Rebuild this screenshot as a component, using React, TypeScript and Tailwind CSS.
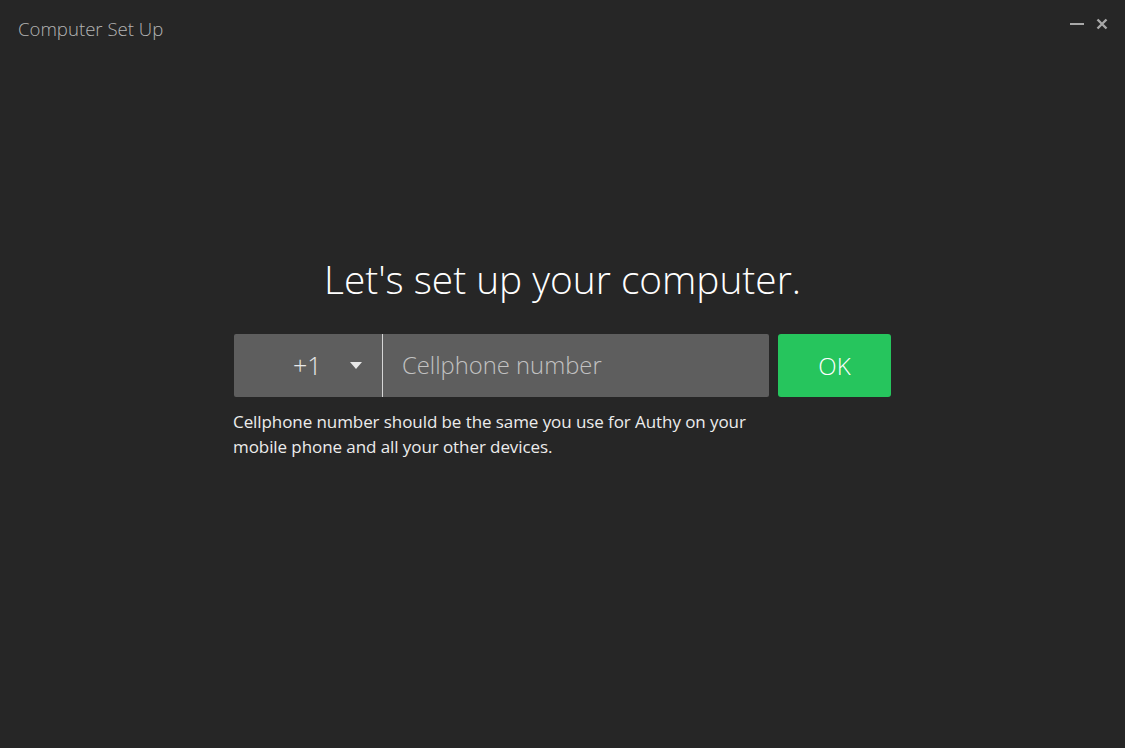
import { useState } from 'react';

export default function App() {
    const [phone, setPhone] = useState('');

    return (
        <div className="relative flex flex-col w-full h-[748px] bg-[#262626] overflow-hidden" style={{ fontFamily: '"Open Sans", sans-serif' }}>
            {/* title bar */}
            <div className="flex items-center justify-between h-[58px] pl-[18px] pr-[17px]">
                <span className="text-[18.6px] font-light text-[#b4b4b4]">Computer Set Up</span>
                <div className="flex items-center gap-[12px] text-[#a8a8a8] -mt-[10px]">
                    <div className="w-[14px] h-[2px] bg-[#a8a8a8]"></div>
                    <svg width="12" height="12" viewBox="0 0 12 12">
                        <path d="M1.5 1.5 L10.5 10.5 M10.5 1.5 L1.5 10.5" stroke="#a8a8a8" strokeWidth="2.4" />
                    </svg>
                </div>
            </div>

            <main className="flex flex-col items-center pt-[193px]">
                <h1 className="text-[38.8px] font-light text-white leading-[56px]">Let's set up your computer.</h1>

                <div className="flex flex-col mt-[27px]">
                    <div className="flex gap-[9px]">
                        <div className="flex w-[535px] h-[63px] bg-[#5e5e5e] rounded-[2px]">
                            <div className="flex items-center w-[149px] border-r border-[#d6d6d6]">
                                <span className="ml-[59px] text-[25px] font-light text-[#e8e8e8]">+1</span>
                                <svg className="ml-[28px]" width="12" height="7" viewBox="0 0 12 7">
                                    <path d="M0 0 H12 L6 7 Z" fill="#e8e8e8" />
                                </svg>
                            </div>
                            <input
                                value={phone}
                                onChange={(e) => setPhone(e.target.value)}
                                placeholder="Cellphone number"
                                className="flex-1 bg-transparent outline-none pl-[19px] pt-[1px] text-[23.8px] font-light text-white placeholder:text-[#c2c2c2]"
                            />
                        </div>
                        <button className="w-[113px] h-[63px] bg-[#26c55d] rounded-[3px] text-white text-[24px] font-light">OK</button>
                    </div>
                    <p className="mt-[12px] -ml-[1px] w-[540px] text-[17px] leading-[25px] tracking-[-0.08px] text-[#ececec]">
                        Cellphone number should be the same you use for Authy on your mobile phone and all your other devices.
                    </p>
                </div>
            </main>
        </div>
    );
}
